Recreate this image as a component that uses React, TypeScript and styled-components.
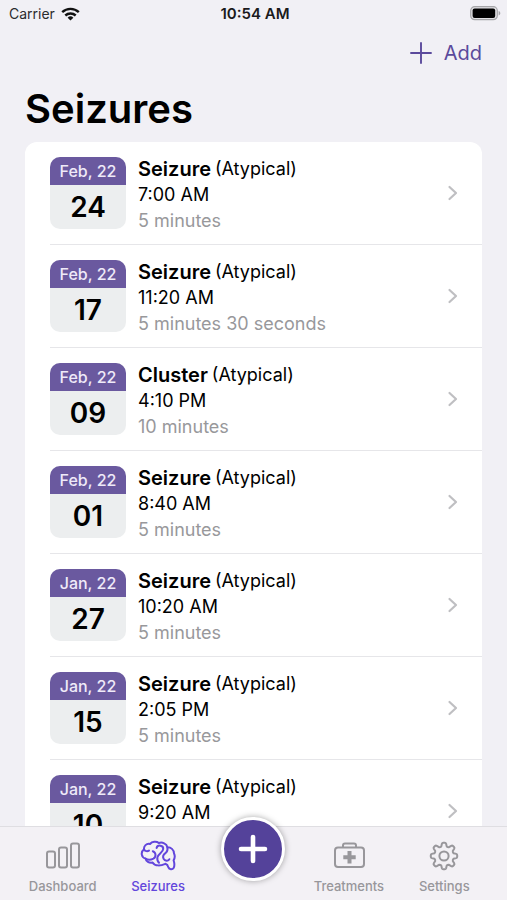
import React from "react";
import styled, { createGlobalStyle } from "styled-components";

const GlobalStyle = createGlobalStyle`
  *, *::before, *::after { box-sizing: border-box; }
  body {
    margin: 0;
    background: #f1f0f5;
    color: #000;
    font-family: Inter, "Liberation Sans", sans-serif;
    -webkit-font-smoothing: antialiased;
  }
  h1, h2, p, ul { margin: 0; padding: 0; }
  button { font: inherit; border: 0; background: none; padding: 0; cursor: pointer; }
`;

const Screen = styled.div`
  display: flex;
  flex-direction: column;
  height: 100vh;
`;

const StatusBar = styled.header`
  display: grid;
  grid-template-columns: 1fr auto 1fr;
  align-items: center;
  height: 27px;
  padding: 0 6px 0 9px;
  font-size: 14px;
  flex: none;
`;

const Carrier = styled.div`
  display: flex;
  align-items: center;
  gap: 6px;
  color: #2b2b2e;
`;

const Clock = styled.time`
  font-size: 15px;
  font-weight: 600;
  color: #1a1a1c;
`;

const Battery = styled.svg`
  justify-self: end;
`;

const NavBar = styled.nav`
  display: flex;
  justify-content: flex-end;
  align-items: center;
  height: 51px;
  padding: 0 25px;
  flex: none;
`;

const AddButton = styled.button`
  display: flex;
  align-items: center;
  gap: 12px;
  color: #5b4a9c;
  font-size: 20px;
  line-height: 24px;
`;

const Title = styled.h1`
  padding: 7px 25px 9px;
  font-size: 40px;
  line-height: 48px;
  font-weight: 600;
  flex: none;
`;

const Content = styled.main`
  flex: 1;
  min-height: 0;
  padding: 0 25px;
  overflow-y: auto;
  scrollbar-width: none;
`;

const List = styled.ul`
  list-style: none;
  background: #fff;
  border-radius: 12px;
  padding-left: 25px;
`;

const Item = styled.li`
  & + & { border-top: 1px solid #e6e6e9; }
`;

const RowButton = styled.button`
  display: flex;
  align-items: center;
  width: 100%;
  height: 102px;
  padding-right: 24px;
  text-align: left;
  color: #000;
`;

const DateTile = styled.div`
  width: 76px;
  border-radius: 10px;
  overflow: hidden;
  background: #eceeef;
  text-align: center;
  flex: none;
`;

const Month = styled.div`
  background: #6a599f;
  color: #efeaf8;
  font-size: 16px;
  line-height: 28px;
  font-weight: 500;
`;

const Day = styled.div`
  font-size: 28px;
  line-height: 44px;
  font-weight: 600;
`;

const Details = styled.div`
  flex: 1;
  min-width: 0;
  padding: 3px 0 0 12px;
  font-size: 18px;
  line-height: 26px;
`;

const Kind = styled.h2`
  display: flex;
  gap: 4px;
  font-size: 18px;
  line-height: 26px;
  font-weight: 400;
`;

const KindName = styled.span`
  font-size: 20px;
  font-weight: 600;
`;

const Duration = styled.p`
  color: #98989b;
`;

const TabBar = styled.nav`
  display: grid;
  grid-template-columns: repeat(5, 1fr);
  height: 74px;
  padding: 0 15px;
  border-top: 1px solid #dfdee2;
  background: #f3f1f5;
  flex: none;
  position: relative;
`;

const Tab = styled.a<{ $active?: boolean }>`
  display: flex;
  flex-direction: column;
  align-items: center;
  gap: 4px;
  padding-top: 11px;
  color: ${(p) => (p.$active ? "#6246dc" : "#98979b")};
  font-size: 13px;
  line-height: 16px;
  font-weight: 500;
  text-decoration: none;
`;

const NewButton = styled.button`
  display: grid;
  place-items: center;
  justify-self: center;
  width: 64px;
  height: 64px;
  margin-top: -10px;
  border: 3px solid #fff;
  border-radius: 50%;
  background: #54429a;
  box-shadow: 0 0 6px rgba(0, 0, 0, 0.35);
`;

const WifiIcon = () => (
  <svg width="19" height="14" viewBox="0 0 19 14" aria-label="Wi-Fi" fill="none" stroke="#111" strokeWidth="2.4">
    <path d="M1.2 5.2a12 12 0 0 1 16.6 0" />
    <path d="M4.3 8.5a7.6 7.6 0 0 1 10.4 0" />
    <path d="M9.5 13.6 6.6 10.7a4.2 4.2 0 0 1 5.8 0Z" fill="#111" stroke="none" />
  </svg>
);

const BatteryIcon = () => (
  <Battery width="31" height="15" viewBox="0 0 31 15" aria-label="Battery full">
    <rect x="0.7" y="0.7" width="26.6" height="13" rx="4" fill="#e2e1e4" stroke="#a5a5a8" strokeWidth="1.2" />
    <rect x="2.6" y="2.5" width="22.6" height="9.4" rx="2" fill="#000" />
    <path d="M28.6 5c2.3.7 2.3 3.7 0 4.4Z" fill="#a5a5a8" />
  </Battery>
);

const AddIcon = () => (
  <svg width="22" height="22" viewBox="0 0 22 22" fill="none" stroke="currentColor" strokeWidth="1.9" strokeLinecap="round" aria-hidden="true">
    <path d="M11 1v20M1 11h20" />
  </svg>
);

const Chevron = () => (
  <svg width="12" height="16" viewBox="0 0 12 16" fill="none" stroke="#bfbfc2" strokeWidth="2.2" strokeLinecap="round" strokeLinejoin="round" aria-hidden="true">
    <path d="M3.5 2 10 8l-6.5 6" />
  </svg>
);

const DashboardIcon = () => (
  <svg width="36" height="36" viewBox="0 0 36 36" fill="none" stroke="currentColor" strokeWidth="2" aria-hidden="true">
    <rect x="2" y="13.5" width="8" height="16" rx="2" />
    <rect x="14" y="9.5" width="8" height="20" rx="2" />
    <rect x="26" y="5.5" width="8" height="24" rx="2" />
  </svg>
);

const BrainIcon = () => (
  <svg width="36" height="36" viewBox="0 0 36 36" fill="none" stroke="currentColor" strokeWidth="2" strokeLinecap="round" strokeLinejoin="round" aria-hidden="true">
    <path d="M4 11.4C3.6 8 6.4 5.2 10 6C12 3.6 16.4 3 18.8 5C22.4 3.8 26.6 5.6 27.4 9.2C30.8 9 34 11.8 34 15.4C35 17.6 34.8 20.4 33.6 22.2C34.4 24.8 34.8 27.8 33.6 30C32.4 32 29.2 31.6 28.4 29.4C28 27.6 27.4 26.4 25.4 25.8C20.8 27.8 15 28.4 12.6 24.6C9 25.2 6 23.6 5.6 20.6C1.2 19.4 0.4 14.2 4 11.4Z" />
    <path d="M4 11.4C5.2 13.4 7.4 13.6 9 12.6M12.8 13.2C16.2 14.4 16.4 19 13.4 20.6C11 21.8 7.6 21.8 5.6 20.6" />
    <path d="M16.6 10C17.4 6.4 23.6 7 23.2 11C23 14.6 18.2 15.6 17.4 19.4C17 21.8 17.8 23.6 19 24.8" />
    <path d="M27.4 9.2C27.8 11.6 27.4 13.4 26 14.6C23.2 16.4 22.6 18.8 23.6 20.8C24.8 23 28.4 23.4 29.4 21.2" />
  </svg>
);

const TreatmentsIcon = () => (
  <svg width="36" height="36" viewBox="0 0 36 36" fill="none" stroke="currentColor" strokeWidth="2" strokeLinejoin="round" aria-hidden="true">
    <rect x="4" y="9.5" width="29" height="19.5" rx="3" />
    <path d="M12 9.5V7.5a2 2 0 0 1 2-2h9a2 2 0 0 1 2 2v2" />
    <path d="M16.5 13h4v4.2h4.2v4h-4.2v4.2h-4v-4.2h-4.2v-4h4.2Z" fill="currentColor" stroke="none" />
  </svg>
);

const SettingsIcon = () => (
  <svg width="36" height="36" viewBox="0 0 36 36" fill="none" stroke="currentColor" strokeWidth="2" strokeLinejoin="round" aria-hidden="true">
    <circle cx="18" cy="18" r="4.6" />
    <path d="M15.3 8.4L15.9 5.8Q16.2 4.8 17.2 4.8H18.8Q19.8 4.8 20.1 5.8L20.7 8.4Q21.8 9.4 23 9.2L25.2 7.8Q26.2 7.2 27 8L28 9Q28.8 9.8 28.2 10.8L26.8 13Q26.6 14.2 27.6 15.3L30.2 15.9Q31.2 16.2 31.2 17.2V18.8Q31.2 19.8 30.2 20.1L27.6 20.7Q26.6 21.8 26.8 23L28.2 25.2Q28.8 26.2 28 27L27 28Q26.2 28.8 25.2 28.2L23 26.8Q21.8 26.6 20.7 27.6L20.1 30.2Q19.8 31.2 18.8 31.2H17.2Q16.2 31.2 15.9 30.2L15.3 27.6Q14.2 26.6 13 26.8L10.8 28.2Q9.8 28.8 9 28L8 27Q7.2 26.2 7.8 25.2L9.2 23Q9.4 21.8 8.4 20.7L5.8 20.1Q4.8 19.8 4.8 18.8V17.2Q4.8 16.2 5.8 15.9L8.4 15.3Q9.4 14.2 9.2 13L7.8 10.8Q7.2 9.8 8 9L9 8Q9.8 7.2 10.8 7.8L13 9.2Q14.2 9.4 15.3 8.4Z" />
  </svg>
);

const NewIcon = () => (
  <svg width="30" height="30" viewBox="0 0 30 30" fill="none" stroke="#fff" strokeWidth="4.6" strokeLinecap="round" aria-hidden="true">
    <path d="M15 3v24M3 15h24" />
  </svg>
);

interface Entry {
  month: string;
  day: string;
  kind: string;
  time: string;
  duration: string;
}

const entries: Entry[] = [
  { month: "Feb, 22", day: "24", kind: "Seizure", time: "7:00 AM", duration: "5 minutes" },
  { month: "Feb, 22", day: "17", kind: "Seizure", time: "11:20 AM", duration: "5 minutes 30 seconds" },
  { month: "Feb, 22", day: "09", kind: "Cluster", time: "4:10 PM", duration: "10 minutes" },
  { month: "Feb, 22", day: "01", kind: "Seizure", time: "8:40 AM", duration: "5 minutes" },
  { month: "Jan, 22", day: "27", kind: "Seizure", time: "10:20 AM", duration: "5 minutes" },
  { month: "Jan, 22", day: "15", kind: "Seizure", time: "2:05 PM", duration: "5 minutes" },
  { month: "Jan, 22", day: "10", kind: "Seizure", time: "9:20 AM", duration: "5 minutes" },
];

const EntryRow = ({ entry }: { entry: Entry }) => (
  <Item>
    <RowButton type="button">
      <DateTile>
        <Month>{entry.month}</Month>
        <Day>{entry.day}</Day>
      </DateTile>
      <Details>
        <Kind>
          <KindName>{entry.kind}</KindName>
          <span>(Atypical)</span>
        </Kind>
        <p>{entry.time}</p>
        <Duration>{entry.duration}</Duration>
      </Details>
      <Chevron />
    </RowButton>
  </Item>
);

export default function App() {
  return (
    <Screen>
      <GlobalStyle />
      <StatusBar>
        <Carrier>
          Carrier
          <WifiIcon />
        </Carrier>
        <Clock>10:54 AM</Clock>
        <BatteryIcon />
      </StatusBar>
      <NavBar>
        <AddButton type="button">
          <AddIcon />
          Add
        </AddButton>
      </NavBar>
      <Title>Seizures</Title>
      <Content>
        <List>
          {entries.map((entry) => (
            <EntryRow key={entry.month + entry.day} entry={entry} />
          ))}
        </List>
      </Content>
      <TabBar>
        <Tab href="#dashboard">
          <DashboardIcon />
          Dashboard
        </Tab>
        <Tab href="#seizures" $active aria-current="page">
          <BrainIcon />
          Seizures
        </Tab>
        <NewButton type="button" aria-label="New entry">
          <NewIcon />
        </NewButton>
        <Tab href="#treatments">
          <TreatmentsIcon />
          Treatments
        </Tab>
        <Tab href="#settings">
          <SettingsIcon />
          Settings
        </Tab>
      </TabBar>
    </Screen>
  );
}
